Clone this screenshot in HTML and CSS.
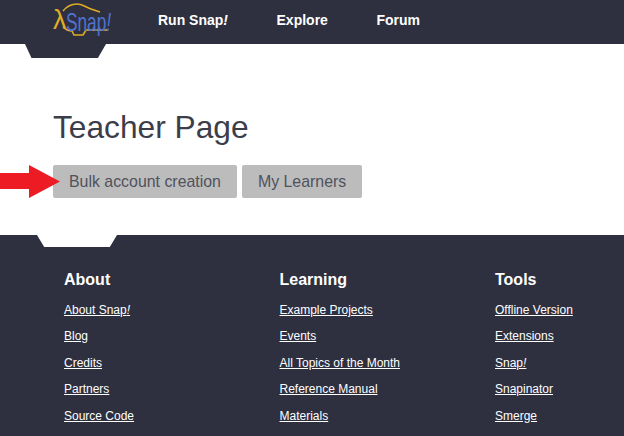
FILE: index.html
```html
<!DOCTYPE html>
<html>
<head>
  <title>Teacher Page</title>
  <link rel="stylesheet" href="styles.css">
</head>
<body>
  <header class="site-header">
    <a class="logo" href="#">
      <svg class="logo-outline" width="62" height="38" viewBox="0 0 62 38">
        <path d="M10 11 C14 6 18 4 24 4 C30 4 34 8 38 9 L47 12" />
        <path d="M10 27 C13 30 17 31 19 31 L21 35 L30 35 L33 30 L54 30" />
      </svg>
      <span class="logo-lambda">&lambda;</span>
      <span class="logo-text">Snap<i>!</i></span>
    </a>
    <nav class="main-nav">
      <a href="#">Run Snap<i>!</i></a>
      <a href="#">Explore</a>
      <a href="#">Forum</a>
    </nav>
  </header>

  <main class="content">
    <h1>Teacher Page</h1>
    <div class="buttons">
      <svg class="arrow" width="60" height="33" viewBox="0 0 60 33">
        <polygon points="0,8 29,8 29,0 60,16.5 29,33 29,24 0,24" />
      </svg>
      <a class="button" href="#">Bulk account creation</a>
      <a class="button" href="#">My Learners</a>
    </div>
  </main>

  <footer class="site-footer">
    <div class="footer-col">
      <h2>About</h2>
      <a href="#">About Snap<i>!</i></a>
      <a href="#">Blog</a>
      <a href="#">Credits</a>
      <a href="#">Partners</a>
      <a href="#">Source Code</a>
    </div>
    <div class="footer-col">
      <h2>Learning</h2>
      <a href="#">Example Projects</a>
      <a href="#">Events</a>
      <a href="#">All Topics of the Month</a>
      <a href="#">Reference Manual</a>
      <a href="#">Materials</a>
    </div>
    <div class="footer-col footer-col-last">
      <h2>Tools</h2>
      <a href="#">Offline Version</a>
      <a href="#">Extensions</a>
      <a href="#">Snap<i>!</i></a>
      <a href="#">Snapinator</a>
      <a href="#">Smerge</a>
    </div>
  </footer>
</body>
</html>
```

FILE: styles.css
```css
html, body {
  margin: 0;
  height: 436px;
  overflow: hidden;
}

body {
  background-color: #ffffff;
  font-family: "Liberation Sans", Arial, sans-serif;
}

a {
  color: #ffffff;
}

.site-header {
  position: relative;
  height: 44px;
  padding-left: 53px;
  display: flex;
  background-color: #2e3040;
}

/* tab under the logo */
.site-header::after {
  content: "";
  position: absolute;
  left: 25px;
  top: 44px;
  width: 81px;
  height: 14px;
  background-color: #2e3040;
  clip-path: polygon(0 0, 100% 0, 90% 100%, 8% 100%);
}

.logo {
  position: relative;
  display: block;
  width: 60px;
  text-decoration: none;
}

.logo-outline {
  position: absolute;
  left: 0;
  top: 0;
  fill: none;
  stroke: #e0ac24;
  stroke-width: 1.6;
}

.logo-lambda {
  position: absolute;
  left: 0;
  top: 6px;
  font-size: 27px;
  line-height: 28px;
  color: #e0ac24;
}

.logo-text {
  position: absolute;
  left: 13px;
  top: 8px;
  font-size: 25px;
  line-height: 28px;
  color: #4f72d0;
  transform: scaleX(0.69);
  transform-origin: left center;
}

.main-nav {
  margin-left: 45px;
  display: flex;
  align-items: flex-start;
  gap: 48.5px;
  padding-top: 12px;
}

.main-nav a {
  font-size: 14px;
  font-weight: bold;
  line-height: 16px;
  text-decoration: none;
}

.content {
  height: 191px;
  box-sizing: border-box;
  padding: 65px 0 0 53px;
}

h1 {
  margin: 0 0 19px;
  font-size: 31.7px;
  font-weight: normal;
  line-height: 37px;
  color: #3b3e49;
}

.buttons {
  position: relative;
  display: flex;
  gap: 5px;
}

.arrow {
  position: absolute;
  left: -53px;
  top: 0;
  z-index: 1;
  fill: #ed1c24;
}

.button {
  height: 33px;
  padding: 0 16px;
  line-height: 33px;
  font-size: 15.9px;
  color: #50525c;
  text-decoration: none;
  background-color: #bcbcbc;
  border-radius: 2px;
}

.site-footer {
  position: relative;
  height: 201px;
  box-sizing: border-box;
  padding: 35px 0 0 64px;
  display: flex;
  background-color: #2e3040;
}

/* white notch at the top of the footer */
.site-footer::before {
  content: "";
  position: absolute;
  left: 37px;
  top: 0;
  width: 80px;
  height: 12px;
  background-color: #ffffff;
  clip-path: polygon(0 0, 100% 0, 91% 100%, 9% 100%);
}

.footer-col {
  flex: 0 0 215.5px;
  display: flex;
  flex-direction: column;
  align-items: flex-start;
}

.footer-col-last {
  flex: 1;
}

.footer-col h2 {
  margin: 0 0 13px;
  font-size: 16px;
  line-height: 20px;
  color: #ffffff;
}

.footer-col a {
  font-size: 12px;
  line-height: 14px;
  margin-bottom: 12.4px;
}
```
